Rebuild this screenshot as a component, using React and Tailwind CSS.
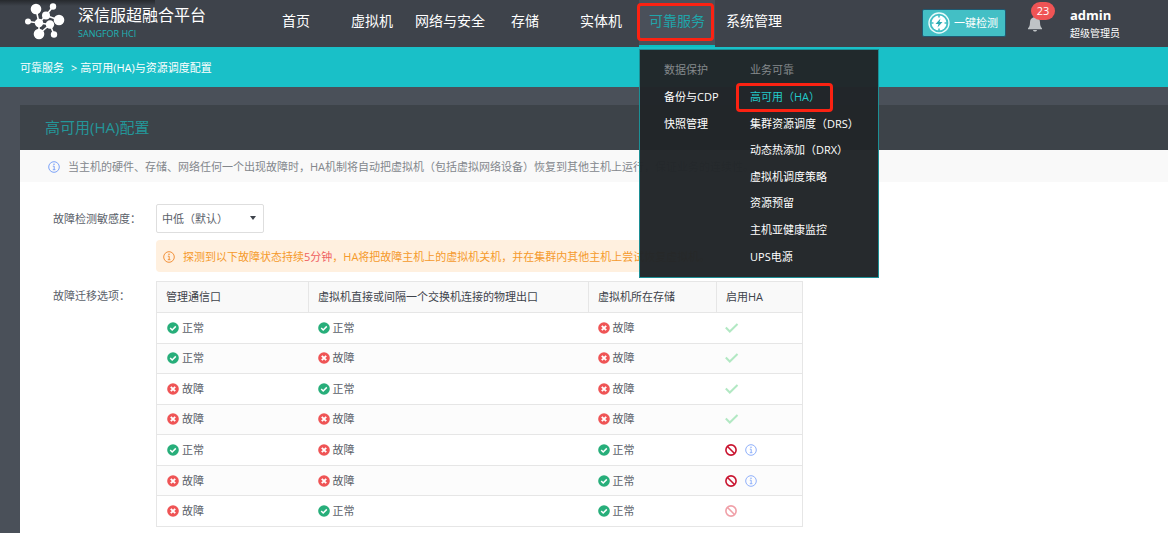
import { useState } from 'react'

const NAV = [
  { label: '首页', width: 'w-[69px]' },
  { label: '虚拟机', width: 'w-16' },
  { label: '网络与安全', width: 'w-24' },
  { label: '存储', width: 'w-[69px]' },
  { label: '实体机', width: 'w-[65px]' },
]

const MENU = [
  { title: '数据保护', items: ['备份与CDP', '快照管理'] },
  {
    title: '业务可靠',
    items: [
      '高可用（HA）',
      '集群资源调度（DRS）',
      '动态热添加（DRX）',
      '虚拟机调度策略',
      '资源预留',
      '主机亚健康监控',
      'UPS电源',
    ],
  },
]

const ROWS = [
  { manage: true, outlet: true, storage: false, ha: 'on' },
  { manage: true, outlet: false, storage: false, ha: 'on' },
  { manage: false, outlet: true, storage: false, ha: 'on' },
  { manage: false, outlet: false, storage: false, ha: 'on' },
  { manage: true, outlet: false, storage: true, ha: 'off' },
  { manage: false, outlet: false, storage: true, ha: 'off' },
  { manage: false, outlet: true, storage: true, ha: 'locked' },
]

function Logo() {
  return (
    <svg viewBox="0 0 42 40" className="w-[42px] h-10 shrink-0" fill="#fff" stroke="#fff" aria-hidden="true">
      <path
        d="M12 6 15 20M15 20 4 18.500M15 20 15 31M29 3.500 22 12.500M22 12.500 35 17M26 21.500 15 31M26 21.500 30 31.500M22 12.500 15 20M15 20 26 21.500"
        strokeWidth="1.6"
        fill="none"
      />
      <g stroke="none">
        <circle cx="12" cy="6" r="5.300" />
        <circle cx="29" cy="3.500" r="3.200" />
        <circle cx="22" cy="12.500" r="4" />
        <circle cx="35" cy="17" r="5.300" />
        <circle cx="4" cy="18.500" r="3" />
        <circle cx="15" cy="20" r="4.200" />
        <circle cx="26" cy="21.500" r="4.200" />
        <circle cx="15" cy="31" r="5.300" />
        <circle cx="30" cy="31.500" r="3.200" />
      </g>
    </svg>
  )
}

function ScanIcon() {
  return (
    <svg viewBox="0 0 22 22" className="w-[22px] h-[22px]" fill="none" aria-hidden="true">
      <circle cx="11" cy="11" r="10" stroke="#e9fbfb" strokeWidth="1.4" />
      <circle cx="11" cy="11" r="7.500" fill="#fff" />
      <path d="M11 3v2.500M11 16.500V19M3 11h2.500M16.500 11H19" stroke="#43bfc5" strokeWidth="1.6" />
      <path d="M12.500 6.500 7.500 12h3l-1 3.500 5-5.500h-3z" fill="#2ba9b3" />
    </svg>
  )
}

function BellIcon() {
  return (
    <svg viewBox="0 0 14 16" className="w-3.5 h-4" fill="#bfc3c6" aria-hidden="true">
      <path d="M7 0c.8 0 1.2.5 1.2 1.2C10.600 1.800 12 3.800 12 6.300c0 3.200.7 4.700 2 6v.9H0v-.9c1.300-1.300 2-2.800 2-6 0-2.500 1.400-4.500 3.800-5.100C5.800.5 6.200 0 7 0zM5 14h4c-.2 1-1 1.600-2 1.600S5.200 15 5 14z" />
    </svg>
  )
}

function InfoIcon({ className }) {
  return (
    <svg viewBox="0 0 12 12" className={`w-3 h-3 shrink-0 ${className}`} fill="none" stroke="currentColor" aria-hidden="true">
      <circle cx="6" cy="6" r="5.300" />
      <path d="M4.800 5.200h1.400v3.500M4.800 8.700h2.600" />
      <circle cx="6" cy="3.200" r="0.800" fill="currentColor" stroke="none" />
    </svg>
  )
}

function BanIcon({ className }) {
  return (
    <svg viewBox="0 0 12 12" className={`w-3 h-3 ${className}`} fill="none" stroke="currentColor" strokeWidth="1.6" aria-hidden="true">
      <circle cx="6" cy="6" r="5.100" />
      <path d="m2.500 2.500 7 7" />
    </svg>
  )
}

function Status({ ok }) {
  return (
    <span className="flex items-center gap-[3px]">
      <svg viewBox="0 0 12 12" className="w-3 h-3" fill="none" stroke="#fff" aria-hidden="true">
        <circle cx="6" cy="6" r="5.800" fill={ok ? '#27ae7a' : '#ef5455'} stroke="none" />
        {ok ? (
          <path d="m3.200 6 2 2 3.600-3.600" strokeWidth="1.5" />
        ) : (
          <path d="m3.800 3.800 4.400 4.400M8.200 3.800 3.800 8.200" strokeWidth="1.9" />
        )}
      </svg>
      {ok ? '正常' : '故障'}
    </span>
  )
}

function HaState({ state }) {
  if (state === 'on') {
    return (
      <svg viewBox="0 0 14 12" className="w-3.5 h-3" fill="none" stroke="#b2e8c3" strokeWidth="2" aria-label="启用">
        <path d="m.8 5.500 4 4 7.700-7.500" />
      </svg>
    )
  }
  if (state === 'locked') return <BanIcon className="text-[#f0a0a8]" />
  return (
    <span className="flex items-center gap-2">
      <BanIcon className="text-[#c9142f]" />
      <InfoIcon className="text-[#8fb0fa]" />
    </span>
  )
}

function MegaMenu() {
  return (
    <div className="absolute left-0 top-[49px] z-10 flex w-[240px] h-[229px] border border-[#1c8f95] bg-[#222629]/98 pl-6 pt-[7px] text-[11px] leading-4 text-white">
      {MENU.map((group, i) => (
        <div key={group.title} className={`grid h-[213px] grid-rows-8 items-center ${i === 0 ? 'w-[86px]' : ''}`}>
          <h3 className="text-[#85898c]">{group.title}</h3>
          <ul className="contents">
            {group.items.map((item) => (
              <li key={item} className="relative whitespace-nowrap">
                <a href="#" className={item.startsWith('高可用') ? 'text-[#22c9c9]' : ''}>
                  {item}
                </a>
                {item.startsWith('高可用') && (
                  <span className="absolute -left-3.5 -top-1.5 h-[29px] w-[97px] rounded-sm border-3 border-[#fb2212]" />
                )}
              </li>
            ))}
          </ul>
        </div>
      ))}
    </div>
  )
}

function Header() {
  return (
    <header className="relative flex h-[47px] bg-[#3e434b] text-white">
      <span className="absolute left-0 top-0 h-1.5 w-[155px] bg-linear-to-b from-[#26292d] to-transparent" />
      <a href="#" className="relative flex w-[276px] shrink-0 gap-3 pl-6 pt-[3px]">
        <Logo />
        <span>
          <span className="block whitespace-nowrap text-[16px] leading-6">深信服超融合平台</span>
          <span className="block text-[9px] leading-[13px] text-[#1fb3b5]">SANGFOR HCI</span>
        </span>
      </a>
      <nav className="flex shrink-0 text-[14px] leading-[41px]">
        {NAV.map((item) => (
          <a key={item.label} href="#" className={`whitespace-nowrap pl-1.5 ${item.width}`}>
            {item.label}
          </a>
        ))}
        <div className="relative">
          <a href="#" className="block h-[47px] w-[76px] border-b-2 border-[#08bfc3] bg-[#4a505a] text-center text-[#20a5aa]">
            可靠服务
          </a>
          <span className="absolute -left-0.5 top-[3px] h-[38px] w-[77px] rounded-sm border-3 border-[#fb2212]" />
          <MegaMenu />
        </div>
        <a href="#" className="whitespace-nowrap pl-[11px]">
          系统管理
        </a>
      </nav>
      <div className="ml-auto flex w-[246px] shrink-0">
        <button
          type="button"
          className="mt-[9px] flex h-7 w-[84px] items-center gap-1 rounded-xs border border-[#1e5a72] bg-[#43bfc5] pl-[5px] text-[11px] whitespace-nowrap"
        >
          <ScanIcon />
          一键检测
        </button>
        <button type="button" aria-label="通知" className="relative ml-[22px] mt-4 h-4 w-3.5">
          <BellIcon />
          <span className="absolute left-[3px] -top-3.5 h-[18px] w-6 rounded-full bg-[#ef5455] text-[11px] leading-[18px]">23</span>
        </button>
        <div className="ml-7 pt-1.5">
          <div className="text-[13px] font-bold leading-[18px]">admin</div>
          <div className="text-[10px] leading-[18px]">超级管理员</div>
        </div>
      </div>
    </header>
  )
}

function MigrationTable() {
  return (
    <table className="h-[246px] w-[647px] table-fixed border-collapse border border-[#e6e6e6] text-left leading-4">
      <colgroup>
        <col className="w-[152px]" />
        <col className="w-[280px]" />
        <col className="w-32" />
        <col />
      </colgroup>
      <thead>
        <tr className="h-[31px] bg-[#f9f9f9] text-[#3e434b]">
          {['管理通信口', '虚拟机直接或间隔一个交换机连接的物理出口', '虚拟机所在存储', '启用HA'].map((h) => (
            <th key={h} className="border border-[#e6e6e6] pl-[9px] font-normal">
              {h}
            </th>
          ))}
        </tr>
      </thead>
      <tbody>
        {ROWS.map((row, i) => (
          <tr key={i} className="border-b border-[#e6e6e6] even:bg-[#fcfcfc]">
            <td className="pl-2.5"><Status ok={row.manage} /></td>
            <td className="pl-[9px]"><Status ok={row.outlet} /></td>
            <td className="pl-[9px]"><Status ok={row.storage} /></td>
            <td className="pl-2"><HaState state={row.ha} /></td>
          </tr>
        ))}
      </tbody>
    </table>
  )
}

export default function App() {
  const [level, setLevel] = useState('low')

  return (
    <div className="h-screen overflow-hidden bg-[#4a5059] font-['Open_Sans','Noto_Sans_CJK_SC',sans-serif] text-[11px]">
      <Header />
      <div className="flex h-10 items-center gap-[7px] bg-[#19c0c8] px-5 pt-0.5 text-white">
        <a href="#">可靠服务</a>
        <span>&gt; 高可用(HA)与资源调度配置</span>
      </div>
      <main className="ml-5 mt-[18px] min-h-screen bg-white">
        <h1 className="flex h-[45px] items-center bg-[#3d4349] pl-[25px] text-[15px] text-[#249699]">高可用(HA)配置</h1>
        <p className="flex h-8 items-center gap-2 overflow-hidden whitespace-nowrap bg-[#f9f9f9] pl-7 pt-0.5 text-[#83878c]">
          <InfoIcon className="text-[#7da3f8]" />
          当主机的硬件、存储、网络任何一个出现故障时，HA机制将自动把虚拟机（包括虚拟网络设备）恢复到其他主机上运行，保证业务的连续性。
        </p>
        <div className="grid grid-cols-[103px_1fr] pl-[33px] pt-[22px] text-[#5b616a]">
          <label htmlFor="level" className="pt-[7px]">故障检测敏感度：</label>
          <div className="relative w-[108px]">
            <select
              id="level"
              value={level}
              onChange={(e) => setLevel(e.target.value)}
              className="h-[29px] w-full appearance-none rounded-xs border border-[#dedede] bg-white pl-[5px] pt-0.5"
            >
              <option value="low">中低（默认）</option>
              <option value="high">高</option>
            </select>
            <span className="pointer-events-none absolute right-2 top-3 border-x-3 border-t-4 border-x-transparent border-t-[#3e434b]" />
          </div>
          <div className="col-start-2 mt-[7px] flex h-8 w-[647px] items-center gap-2 overflow-hidden whitespace-nowrap rounded-sm bg-[#fff0df] pl-[7px] pt-0.5 text-[#f59a2c]">
            <InfoIcon className="text-[#f2913a]" />
            <span>
              探测到以下故障状态持续<span className="text-[#ef5f5f]">5分钟</span>，HA将把故障主机上的虚拟机关机，并在集群内其他主机上尝试恢复虚拟机。
            </span>
          </div>
          <span className="mt-[9px] pt-[7px]">故障迁移选项：</span>
          <div className="mt-[9px]">
            <MigrationTable />
          </div>
        </div>
      </main>
    </div>
  )
}
